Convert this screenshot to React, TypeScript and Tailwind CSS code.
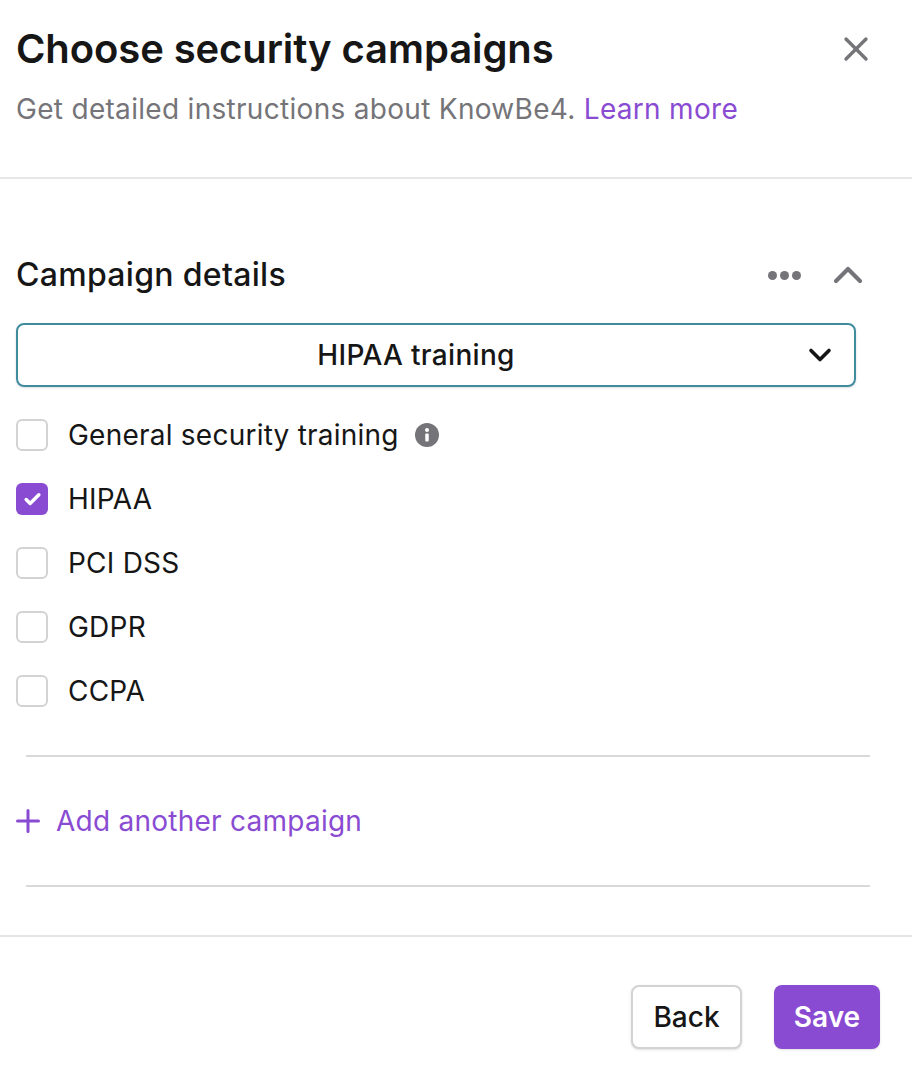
import { Check, ChevronDown, ChevronUp, X } from "lucide-react";

const options = [
  { label: "General security training", info: true },
  { label: "HIPAA", checked: true },
  { label: "PCI DSS" },
  { label: "GDPR" },
  { label: "CCPA" },
];

function InfoDot() {
  return (
    <svg width="24" height="24" viewBox="0 0 24 24" className="ml-4">
      <circle cx="12" cy="12" r="12" fill="#757478" />
      <circle cx="12" cy="7" r="2" fill="#fff" />
      <rect x="10.25" y="10.5" width="3.5" height="8" rx="1" fill="#fff" />
    </svg>
  );
}

export default function App() {
  return (
    <div className="h-[1066px] w-[912px] overflow-hidden bg-white font-['Inter',sans-serif] text-[#161616]">
      <header className="relative h-[179px] border-b-2 border-[#e6e6e6] px-4 pt-[24px]">
        <h1 className="text-[40px] leading-[50px] font-semibold tracking-[-0.1px]">Choose security campaigns</h1>
        <p className="mt-[13px] text-[28px] leading-[44px] tracking-[0.3px] text-[#757478]">
          Get detailed instructions about KnowBe4. <span className="text-[#8a4bd3]">Learn more</span>
        </p>
        <X className="absolute top-[29px] right-[36px] text-[#757478]" size={40} strokeWidth={2} />
      </header>

      <section className="px-4 pt-[74px]">
        <div className="flex h-[44px] items-center justify-between">
          <h2 className="text-[32px] font-medium tracking-[0.3px]">Campaign details</h2>
          <div className="flex items-center">
            <div className="flex gap-[3px]">
              <span className="h-[9px] w-[9px] rounded-full bg-[#757478]" />
              <span className="h-[9px] w-[9px] rounded-full bg-[#757478]" />
              <span className="h-[9px] w-[9px] rounded-full bg-[#757478]" />
            </div>
            <ChevronUp className="mr-[24px] ml-[23px] text-[#757478]" size={48} strokeWidth={2.1} />
          </div>
        </div>

        <div className="relative mt-[26px] flex h-[64px] w-[840px] items-center justify-center rounded-lg border-2 border-[#408b9e] pr-[40px] shadow-sm">
          <span className="text-[28px] font-medium tracking-[0.3px]">HIPAA training</span>
          <ChevronDown className="absolute top-[12px] right-[16px]" size={36} strokeWidth={2.4} />
        </div>

        <ul className="mt-4">
          {options.map((o) => (
            <li key={o.label} className="flex h-[64px] items-center">
              {o.checked ? (
                <span className="flex h-8 w-8 items-center justify-center rounded-md bg-[#8a4bd3]">
                  <Check className="text-white" size={19} strokeWidth={4.4} />
                </span>
              ) : (
                <span className="h-8 w-8 rounded-md border-2 border-[#d3d3d3]" />
              )}
              <span className="ml-[20px] text-[28px] tracking-[0.23px]">{o.label}</span>
              {o.info && <InfoDot />}
            </li>
          ))}
        </ul>
      </section>

      <div className="mx-[26px] mt-[32px] h-[2px] w-[844px] bg-[#d9d9d9]" />
      <div className="flex h-[128px] items-center px-4 text-[#8a4bd3]">
        <svg width="24" height="24" viewBox="0 0 24 24" stroke="currentColor" strokeWidth="3" strokeLinecap="round">
          <path d="M1.5 12h21M12 1.5v21" />
        </svg>
        <span className="ml-4 text-[28px] tracking-[0.25px]">Add another campaign</span>
      </div>
      <div className="mx-[26px] h-[2px] w-[844px] bg-[#d9d9d9]" />

      <footer className="mt-[48px] flex h-[130px] items-start justify-end gap-8 border-t-2 border-[#e6e6e6] px-8 pt-[48px]">
        <button className="h-[64px] w-[111px] rounded-lg border-2 border-[#d3d3d3] bg-white text-[28px] font-medium shadow-sm">
          Back
        </button>
        <button className="h-[64px] w-[106px] rounded-lg bg-[#8a4bd3] text-[28px] font-semibold text-white shadow-sm">
          Save
        </button>
      </footer>
    </div>
  );
}
